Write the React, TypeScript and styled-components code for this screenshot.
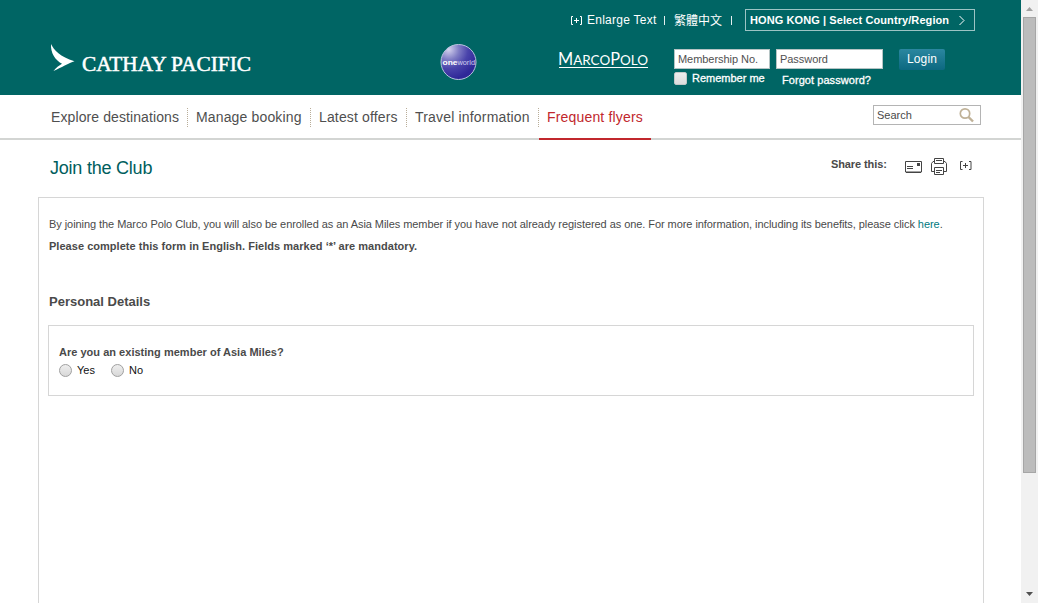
import React from "react";
import styled, { createGlobalStyle } from "styled-components";

const Global = createGlobalStyle`
  html, body { margin: 0; padding: 0; background: #fff; overflow: hidden; }
  *, *::before, *::after { box-sizing: border-box; }
  body { font-family: "Liberation Sans", Arial, sans-serif; font-size: 11px; color: #4a4a4a; }
  svg { display: block; flex: none; }
`;

const Window = styled.div`
  display: flex;
  width: 1038px;
  height: 603px;
  overflow: hidden;
`;

const Page = styled.div`
  width: 1021px;
  height: 603px;
  display: flex;
  flex-direction: column;
`;

const Text = styled.span<{ $w: number; $track?: number }>`
  flex: none;
  width: ${(p) => p.$w}px;
  white-space: nowrap;
  letter-spacing: ${(p) => p.$track ?? 0}px;
`;

const Header = styled.header`
  flex: none;
  height: 95px;
  background: #006564;
  color: #fff;
`;

const TopBar = styled.div`
  display: flex;
  height: 40px;
  padding: 9px 0 0 570px;
  line-height: 22px;
  font-size: 12px;
`;

const PlusIcon = styled.svg`
  margin: 6px 4px 0 0;
`;

const Pipe = styled.i`
  width: 1px;
  height: 9px;
  margin: 7px 0 0;
  background: #e4efef;
`;

const Chinese = styled(Text)`
  margin: 0 8px 0 9px;
  font-family: "Noto Sans CJK TC", sans-serif;
`;

const Region = styled.button`
  display: flex;
  width: 230px;
  height: 22px;
  margin: 0 0 0 13px;
  padding: 0 0 0 4px;
  border: 1px solid #9cc4c4;
  background: none;
  color: #fff;
  font: bold 11px/20px "Liberation Sans", Arial, sans-serif;
  text-align: left;

  svg { margin: 5px 0 0 9px; }
`;

const BrandBar = styled.div`
  display: flex;
  height: 55px;
  padding-left: 50px;
`;

const CathayLogo = styled.svg`
  margin-top: 3px;
`;

const OneworldLogo = styled.svg`
  margin: 3px 0 0 185px;
`;

const MarcoPoloLogo = styled.svg`
  margin: 8px 0 0 79px;
`;

const LoginForm = styled.form`
  display: grid;
  grid-template-columns: 102px 123px 46px;
  grid-template-rows: 20px 1fr;
  margin: 9px 0 0 25px;
`;

const Field = styled.div<{ $w: number }>`
  width: ${(p) => p.$w}px;
  height: 20px;
  padding-left: 3px;
  border: 1px solid #b5c4c4;
  background: #fff;
  color: #505050;
  line-height: 19px;
  letter-spacing: -0.05px;
`;

const LoginButton = styled.button`
  width: 46px;
  height: 21px;
  padding: 0;
  border: 0;
  border-radius: 2px;
  background: linear-gradient(#2b87a0, #0c6880);
  color: #fff;
  font: 12px/19px "Liberation Sans", Arial, sans-serif;
  letter-spacing: 0.1px;
`;

const Remember = styled.label`
  display: flex;
  line-height: 18px;
  -webkit-text-stroke: 0.3px #fff;
`;

const Box = styled.i`
  width: 13px;
  height: 13px;
  margin: 3px 5px 0 0;
  border: 1px solid #c3c8c8;
  border-radius: 2px;
  background: linear-gradient(#ededed, #dcdcdc);
`;

const Forgot = styled.a`
  padding-left: 6px;
  line-height: 22px;
  letter-spacing: 0.06px;
  -webkit-text-stroke: 0.3px #fff;
`;

const Nav = styled.nav`
  flex: none;
  display: flex;
  height: 45px;
  padding-left: 43px;
  border-bottom: 2px solid #d3d5d3;
`;

const NavItem = styled.a<{ $w: number; $active?: boolean }>`
  flex: none;
  display: flex;
  width: ${(p) => p.$w}px;
  height: 45px;
  padding-left: 8px;
  border-bottom: 2px solid ${(p) => (p.$active ? "#c1272d" : "transparent")};
  color: ${(p) => (p.$active ? "#c1272d" : "#4f4f4f")};
  font-size: 14px;
  line-height: 44px;
  white-space: nowrap;
`;

const Divider = styled.i`
  width: 1px;
  height: 19px;
  margin: 13px 0 0 auto;
  background: repeating-linear-gradient(#b9ad98 0 1px, transparent 1px 2px);
`;

const Search = styled.div`
  display: flex;
  justify-content: space-between;
  width: 108px;
  height: 20px;
  margin: 10px 0 0 222px;
  padding: 0 5px 0 3px;
  border: 1px solid #b4b4b4;
  line-height: 19px;

  svg { margin-top: 1px; }
`;

const TitleRow = styled.div`
  flex: none;
  display: flex;
  height: 57px;
  padding-left: 50px;
`;

const Title = styled.h1`
  width: 781px;
  margin: 0;
  color: #005e5d;
  font-size: 18px;
  font-weight: 400;
  line-height: 56px;
  letter-spacing: -0.22px;
`;

const Share = styled.div`
  display: flex;
  align-items: flex-start;
  font-weight: bold;
  line-height: 49px;
`;

const ShareIcon = styled.svg<{ $gap: number; $top: number }>`
  margin: ${(p) => p.$top}px 0 0 ${(p) => p.$gap}px;
`;

const Panel = styled.main`
  flex: 1;
  width: 946px;
  margin-left: 38px;
  padding: 15px 9px 0;
  border: 1px solid #d6d6d6;
  border-bottom: 0;
`;

const Paragraph = styled.p<{ $bold?: boolean }>`
  margin: 0;
  padding-left: 1px;
  font-weight: ${(p) => (p.$bold ? "bold" : "normal")};
  line-height: 22px;
  letter-spacing: ${(p) => (p.$bold ? 0.03 : -0.063)}px;
  white-space: nowrap;
`;

const Here = styled.a`
  color: #007a80;
`;

const Section = styled.h2`
  margin: 34px 0 0;
  padding-left: 1px;
  font-size: 13px;
  line-height: 22px;
`;

const Question = styled.fieldset`
  width: 926px;
  height: 71px;
  margin: 12px 0 0;
  padding: 17px 0 0 10px;
  border: 1px solid #d6d6d6;
`;

const QuestionText = styled.div`
  font-weight: bold;
  line-height: 18px;
  letter-spacing: 0.02px;
`;

const Options = styled.div`
  display: flex;
  color: #111;
`;

const Option = styled.label<{ $w: number }>`
  display: flex;
  width: ${(p) => p.$w}px;
  line-height: 18px;
`;

const Radio = styled.i`
  width: 13px;
  height: 13px;
  margin: 3px 5px 0 0;
  border: 1px solid #a0a0a0;
  border-radius: 50%;
  background: linear-gradient(#eee, #d8d8d8);
`;

const Scrollbar = styled.div`
  display: flex;
  flex-direction: column;
  align-items: center;
  width: 17px;
  height: 603px;
  background: #f1f1f1;
`;

const Thumb = styled.div`
  width: 13px;
  height: 456px;
  border: 1px solid #a6a6a6;
  background: #bcbcbc;
`;

const Arrow = styled.svg`
  margin-top: auto;
`;

const nav = [
  { label: "Explore destinations", w: 145, t: 0.1 },
  { label: "Manage booking", w: 123, t: 0.15 },
  { label: "Latest offers", w: 96, t: 0.15 },
  { label: "Travel information", w: 132, t: 0.18 },
];

export default function App() {
  return (
    <Window>
      <Global />
      <Page>
        <Header>
          <TopBar>
            <PlusIcon width="13" height="11" viewBox="0 0 13 11">
              <path d="M3 1.500H1.500V9.500H3M10 1.500H11.500V9.500H10M4 5.500H9M6.500 3V8" fill="none" stroke="#fff" />
            </PlusIcon>
            <Text $w={77} $track={0.25}>Enlarge Text</Text>
            <Pipe />
            <Chinese $w={49}>繁體中文</Chinese>
            <Pipe />
            <Region>
              <Text $w={199} $track={0.09}>HONG KONG | Select Country/Region</Text>
              <svg width="8" height="11" viewBox="0 0 8 11">
                <path d="M1.500 1L6 5.500L1.500 10" fill="none" stroke="#fff" />
              </svg>
            </Region>
          </TopBar>
          <BrandBar>
            <CathayLogo width="205" height="36" viewBox="0 0 205 36">
              <path d="M1 1C4 7 10 14 24.500 18.200C19 20 11 24.500 3.500 28C6 25 9 22.500 12 20.800C5 17 .5 10 1 1Z" fill="#fff" />
              <text x="32" y="27.800" textLength="169" lengthAdjust="spacingAndGlyphs" fontFamily="Liberation Serif, serif" fontSize="20.300" fill="#fff" stroke="#fff" strokeWidth=".5">CATHAY PACIFIC</text>
            </CathayLogo>
            <OneworldLogo width="38" height="38" viewBox="0 0 38 38">
              <defs>
                <radialGradient id="globe" cx=".22" cy=".14" r=".85">
                  <stop offset="0" stopColor="#d5d3ee" />
                  <stop offset=".35" stopColor="#7f7cc4" />
                  <stop offset=".65" stopColor="#4a44ab" />
                  <stop offset="1" stopColor="#2f2898" />
                </radialGradient>
              </defs>
              <circle cx="18.500" cy="19" r="17.500" fill="url(#globe)" stroke="#b8c4de" />
              <text x="2.500" y="21.500" textLength="15" lengthAdjust="spacingAndGlyphs" fontFamily="Liberation Sans, sans-serif" fontWeight="700" fontSize="8" fill="#fff">one</text>
              <text x="17.500" y="21.500" textLength="17.500" lengthAdjust="spacingAndGlyphs" fontFamily="Liberation Sans, sans-serif" fontSize="8" fill="#d2d0f0">world</text>
            </OneworldLogo>
            <MarcoPoloLogo width="92" height="24" viewBox="0 0 92 24">
              <text x="1" y="17" textLength="90" lengthAdjust="spacingAndGlyphs" fontFamily="Lato, sans-serif" fontSize="14" fill="#fff">
                <tspan fontSize="17">M</tspan>ARCO<tspan fontSize="17">P</tspan>OLO
              </text>
              <path d="M2 19.500H91" stroke="#fff" />
            </MarcoPoloLogo>
            <LoginForm>
              <Field $w={96}>Membership No.</Field>
              <Field $w={107}>Password</Field>
              <LoginButton type="button">Login</LoginButton>
              <Remember><Box /><Text $w={72}>Remember me</Text></Remember>
              <Forgot>Forgot password?</Forgot>
            </LoginForm>
          </BrandBar>
        </Header>
        <Nav>
          {nav.map((n) => (
            <NavItem key={n.label} $w={n.w}>
              <Text $w={n.w - 12} $track={n.t}>{n.label}</Text>
              <Divider />
            </NavItem>
          ))}
          <NavItem $w={112} $active><Text $w={100} $track={0.17}>Frequent flyers</Text></NavItem>
          <Search>
            Search
            <svg width="17" height="17" viewBox="0 0 17 17" fill="none" stroke="#c0b298">
              <circle cx="7" cy="6.500" r="4.700" strokeWidth="1.700" />
              <path d="M10.500 10L15 14.500" strokeWidth="2.400" />
            </svg>
          </Search>
        </Nav>
        <TitleRow>
          <Title>Join the Club</Title>
          <Share>
            <Text $w={57} $track={-0.1}>Share this:</Text>
            <ShareIcon $gap={17} $top={21} width="17" height="12" viewBox="0 0 17 12">
              <path d="M.5 .5H16.500V11H.5ZM2 5.500H8M2 7.500H8M1 11.500H16" fill="none" stroke="#444" />
              <path d="M12 2h3v3h-3z" fill="#444" />
            </ShareIcon>
            <ShareIcon $gap={9} $top={18} width="16" height="17" viewBox="0 0 16 17">
              <path d="M3.500 5.500V.5H12.500V5.500M3.500 5.500H12.500M3.500 13.500H.5V5.500L2 3.500H3.500M12.500 13.500H15.500V5.500L14 3.500H12.500M3.500 9.500H12.500V16.500H3.500ZM5 12.500H11M5 14.500H9M5 2.500H11" fill="none" stroke="#444" />
            </ShareIcon>
            <ShareIcon $gap={13} $top={21} width="12" height="10" viewBox="0 0 12 10">
              <path d="M2.500 .5H.5V8.500H2.500M9 .5H11V8.500H9M3 4.500H8M5.500 2V7" fill="none" stroke="#444" />
            </ShareIcon>
          </Share>
        </TitleRow>
        <Panel>
          <Paragraph>
            By joining the Marco Polo Club, you will also be enrolled as an Asia Miles member if you have not already registered as one. For more information, including its benefits, please click <Here>here</Here>.
          </Paragraph>
          <Paragraph $bold>Please complete this form in English. Fields marked ‘*’ are mandatory.</Paragraph>
          <Section>Personal Details</Section>
          <Question>
            <QuestionText>Are you an existing member of Asia Miles?</QuestionText>
            <Options>
              <Option $w={52}><Radio />Yes</Option>
              <Option $w={52}><Radio />No</Option>
            </Options>
          </Question>
        </Panel>
      </Page>
      <Scrollbar>
        <svg width="17" height="17" viewBox="0 0 17 17"><path d="M5 11L8.500 7L12 11Z" fill="#a3a3a3" /></svg>
        <Thumb />
        <Arrow width="17" height="17" viewBox="0 0 17 17"><path d="M5 6L8.500 10L12 6Z" fill="#505050" /></Arrow>
      </Scrollbar>
    </Window>
  );
}
